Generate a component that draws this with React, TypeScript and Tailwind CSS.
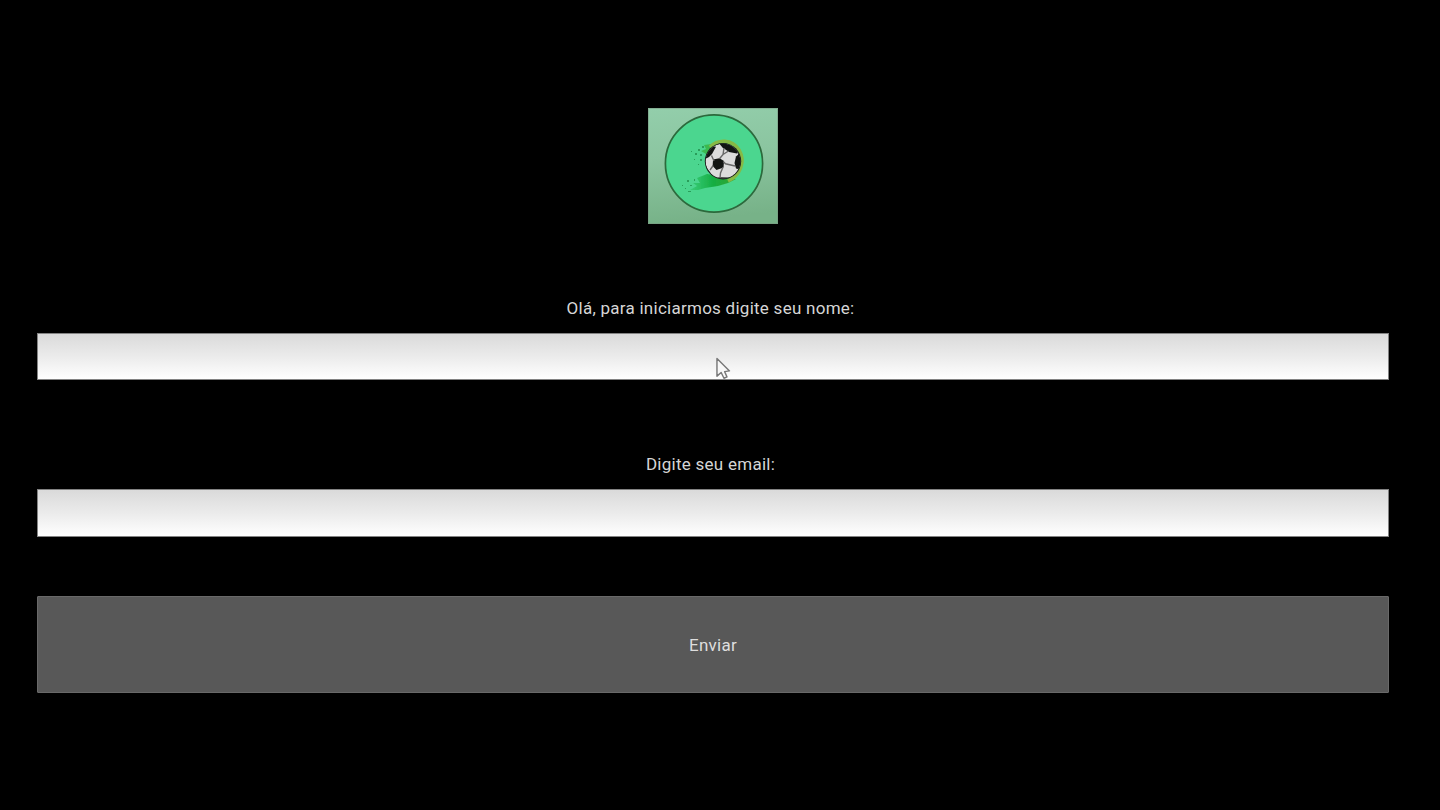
import type { ReactNode } from "react";

function Logo() {
  return (
    <svg
      viewBox="0 0 130 116"
      className="mt-[108px] h-[116px] w-[130px] shrink-0"
      role="img"
    >
      <defs>
        <linearGradient id="tile" x1="0" y1="0" x2="0.12" y2="1">
          <stop offset="0" stopColor="#93ceab" />
          <stop offset="0.45" stopColor="#8bc5a0" />
          <stop offset="1" stopColor="#77b288" />
        </linearGradient>
        <linearGradient id="trail" x1="0" y1="0" x2="1" y2="0">
          <stop offset="0" stopColor="#2fc76c" stopOpacity="0.7" />
          <stop offset="0.5" stopColor="#15ad43" />
          <stop offset="1" stopColor="#35a52f" />
        </linearGradient>
        <clipPath id="ball">
          <circle cx="75" cy="53.2" r="17.4" />
        </clipPath>
        <filter id="soft" x="-20%" y="-20%" width="140%" height="140%">
          <feGaussianBlur stdDeviation="0.6" />
        </filter>
      </defs>
      <rect width="130" height="116" fill="url(#tile)" />
      <rect x="0.5" y="0.5" width="129" height="115" fill="none" stroke="#78967f" strokeOpacity="0.55" />
      <circle cx="66" cy="55.5" r="48.6" fill="#4bd68f" stroke="#2c693c" strokeWidth="1.7" />
      <g filter="url(#soft)">
        <path d="M58 46 L53 43 L58 41 L56 37 L67 35.5 L80 33 L76 45 L60 50Z" fill="#3bb94f" />
        <path d="M42 82 L49 78 L45 75 L52 75 L49 70 L59 66 L78 69 L88 71 L80 75 L70 78 L57 80 L50 82Z" fill="url(#trail)" />
        <path d="M62 39 C70 31 84 31 91 42 C98 54 92 67 80 73" fill="none" stroke="#86b944" strokeWidth="3.6" />
      </g>
      <g fill="#299d5a">
        <path d="M50 41h2v2h-2zM54 38h2v2h-2zM47 45h2v2h-2zM52 46h2v2h-2zM46 51h1v1h-1zM52 51h2v2h-2zM43 43h1v1h-1zM50 56h1v1h-1zM34 77h1v1h-1zM39 72h2v2h-2zM42 77h2v1h-2zM37 80h1v1h-1zM46 71h1v2h-1zM40 83h3v1h-3z" />
      </g>
      <circle cx="75" cy="53.2" r="18.2" fill="#1d211e" />
      <g clipPath="url(#ball)">
        <circle cx="75" cy="53.2" r="17.4" fill="#dcdcdc" />
        <g fill="#121513">
          <path d="M65 51.5 L71.5 50.3 L76 53 L75.5 59.5 L68.5 62 L64.6 58Z" />
          <path d="M70 34 L89 35 L89 45.5 L81 44 L74.5 39.5Z" />
          <path d="M88 48.5 L94 43 L94 62 L88 60.5 L86.5 55Z" />
          <path d="M58 37 L68 38.8 L64 46 L61 49 L57 51Z" />
          <path d="M56 59 L60.5 62 L65.5 69 L60 72Z" />
          <path d="M68 74 L70.5 69.3 L80 69.5 L85 71 L76 75Z" />
          <path d="M83 34 L90 38 L94 46 L91 48 L88 42Z" />
        </g>
        <path
          d="M71.5 50.8 L75 46.5 L80.5 43 M63.5 47.5 L66 53 M75.2 53.5 L77.5 55.8 L87 58 M75 59.2 L72.5 65 L72 70 M65.2 57.5 L62 62 M75 46.5 L76 40"
          fill="none"
          stroke="#686868"
          strokeWidth="1.4"
        />
      </g>
    </svg>
  );
}

function Label({ children }: { children: ReactNode }) {
  return (
    <span className="block h-6 text-center text-[17px] leading-6 tracking-[0.26px] whitespace-nowrap text-[#d6d6d6]">
      {children}
    </span>
  );
}

function Pointer() {
  return (
    <svg viewBox="0 0 16 24" className="pointer-events-none absolute top-[24px] left-[678px] h-[23px] w-[16px]">
      <path
        d="M1.7 1.5 V20 L6.1 16.2 L9 22.2 L12.2 20.8 L9.7 15.3 L14.8 14.5 Z"
        fill="#f8f8f8"
        stroke="#787878"
        strokeWidth="1.5"
        strokeLinejoin="round"
      />
    </svg>
  );
}

const fieldClass =
  "block w-full border border-[#838383] bg-linear-to-b from-[#dadada] via-[#ebebeb] to-[#ffffff] px-3 text-black outline-none";

export default function App() {
  return (
    <main className="flex h-[810px] w-full flex-col items-center overflow-hidden bg-black pr-[51px] pl-[37px] font-['Roboto',sans-serif]">
      <Logo />
      <form className="mt-[72px] w-full" onSubmit={(event) => event.preventDefault()}>
        <label className="block">
          <div className="pr-[5px]">
            <Label>Olá, para iniciarmos digite seu nome:</Label>
          </div>
          <div className="relative mt-[13px] overflow-hidden">
            <input type="text" className={`${fieldClass} h-[47px]`} />
            <Pointer />
          </div>
        </label>
        <label className="mt-[72px] block">
          <div className="pr-[5px]">
            <Label>Digite seu email:</Label>
          </div>
          <input type="email" className={`${fieldClass} mt-[13px] h-[48px]`} />
        </label>
        <button
          type="submit"
          className="mt-[59px] block h-[97px] w-full rounded-[1px] border border-[#696969] bg-[#585858] pt-[3px] text-center text-[17px] tracking-[0.26px] text-[#dedede]"
        >
          Enviar
        </button>
      </form>
    </main>
  );
}
